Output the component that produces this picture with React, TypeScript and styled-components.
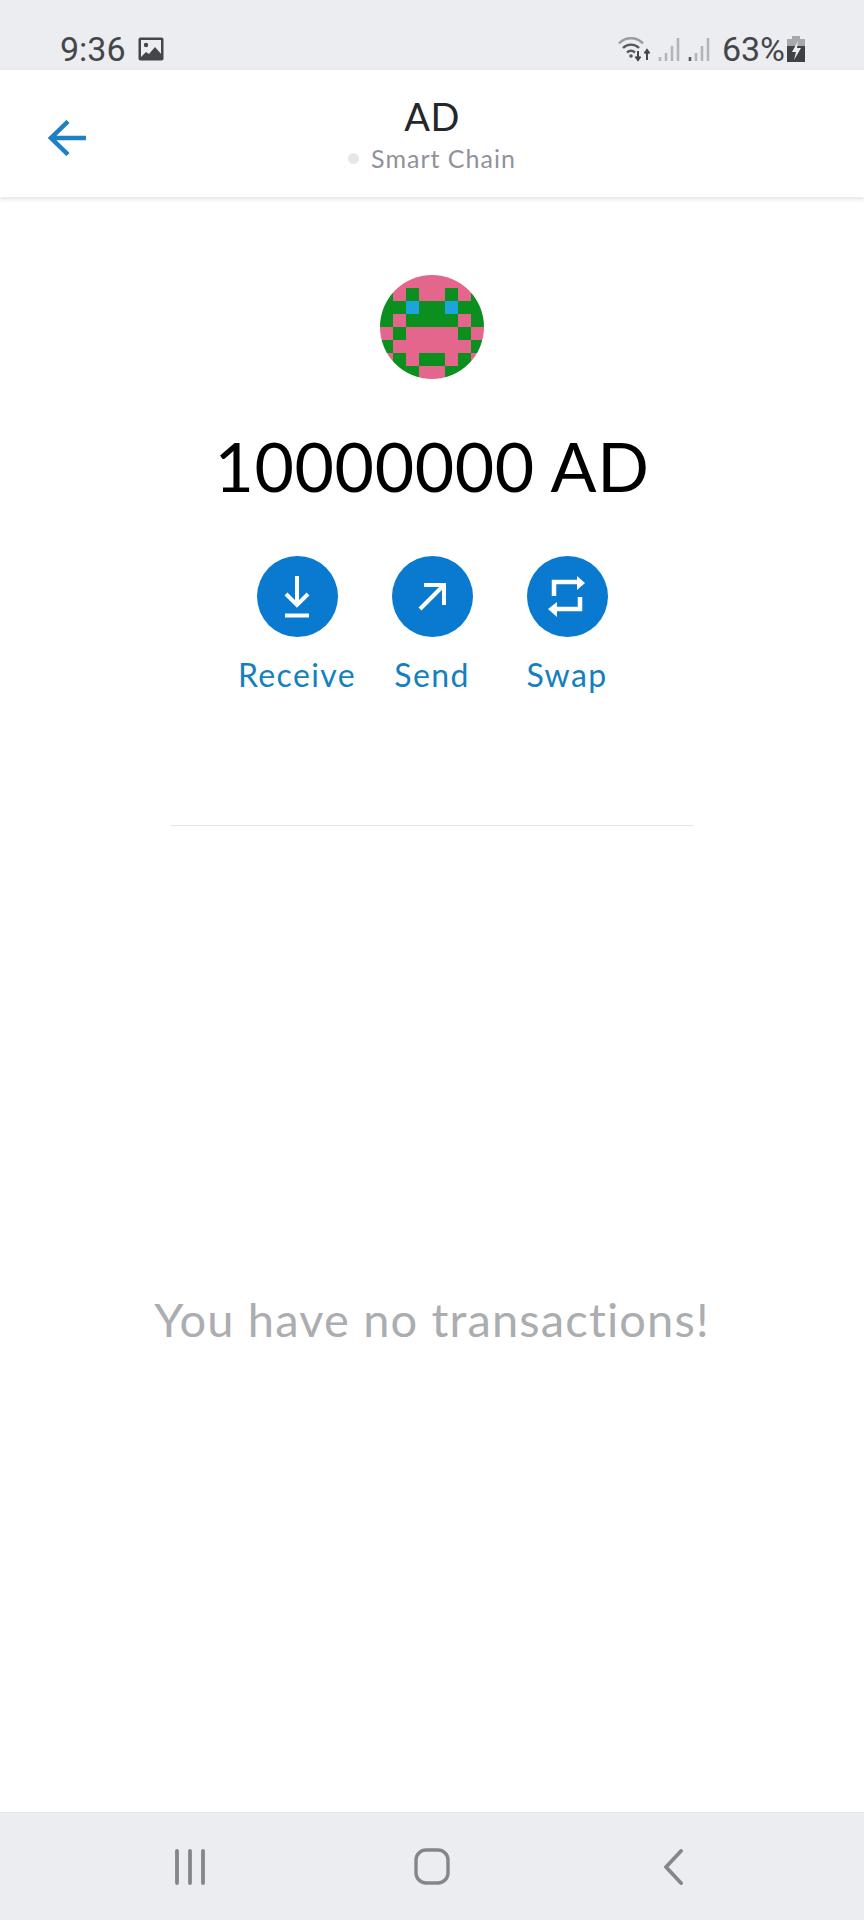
import React, { FC } from 'react'
import styled, { createGlobalStyle } from 'styled-components'

const GlobalStyle = createGlobalStyle`
  html, body {
    margin: 0;
    padding: 0;
    background: #fff;
    font-family: Lato, "Liberation Sans", sans-serif;
    font-variant-ligatures: none;
  }
`

const Screen = styled.div`
  width: 864px;
  height: 1920px;
  display: flex;
  flex-direction: column;
  overflow: hidden;
  background: #fff;
`

const StatusBar = styled.div`
  height: 70px;
  flex: none;
  box-sizing: border-box;
  padding: 32px 59px 0 60px;
  background: #ecedf1;
  display: flex;
  justify-content: space-between;
  align-items: flex-start;
  color: #44464a;
  font-family: Roboto, sans-serif;
  font-size: 34px;
  line-height: 34px;
`

const StatusGroup = styled.div`
  display: flex;
  align-items: center;
`

const Percent = styled.span`
  margin-left: 11px;
`

const Header = styled.header`
  height: 127px;
  flex: none;
  box-sizing: border-box;
  padding: 9px 24px 0 48px;
  position: relative;
  display: flex;
  align-items: center;
  background: #fff;
  box-shadow: 0 2px 5px rgba(0, 0, 0, 0.12);
`

const HeaderTitle = styled.div`
  position: absolute;
  left: 0;
  right: 0;
  top: 24px;
  text-align: center;
  color: #24272a;
`

const TokenName = styled.div`
  font-size: 38px;
  line-height: 44px;
  letter-spacing: 0.5px;
`

const Network = styled.div`
  margin-top: 5px;
  display: flex;
  justify-content: center;
  align-items: center;
  gap: 12px;
  font-size: 25px;
  line-height: 30px;
  letter-spacing: 1px;
  color: #8f9399;
`

const NetworkDot = styled.span`
  width: 11px;
  height: 11px;
  border-radius: 50%;
  background: #e6e7e9;
`

const Body = styled.main`
  flex: 1;
  display: flex;
  flex-direction: column;
  align-items: center;
  padding-top: 78px;
`

const Balance = styled.div`
  margin-top: 43px;
  font-size: 68px;
  line-height: 88px;
  letter-spacing: 0.6px;
  color: #000;
  white-space: nowrap;
`

const Actions = styled.div`
  margin-top: 46px;
  display: flex;
  gap: 55px;
`

const Action = styled.div`
  width: 80px;
  display: flex;
  flex-direction: column;
  align-items: center;
`

const ActionCircle = styled.div`
  width: 81px;
  height: 81px;
  flex: none;
  border-radius: 50%;
  background: #0a7ad1;
  display: flex;
  align-items: center;
  justify-content: center;
`

const ActionLabel = styled.div`
  margin-top: 19px;
  font-size: 32px;
  line-height: 38px;
  letter-spacing: 1.4px;
  color: #1480bd;
  white-space: nowrap;
`

const Divider = styled.div`
  margin-top: 131px;
  width: 523px;
  height: 1px;
  background: #e6e7e9;
`

const EmptyText = styled.div`
  margin-top: 465px;
  font-size: 47px;
  line-height: 56px;
  letter-spacing: 1.15px;
  color: #abadb0;
  white-space: nowrap;
`

const NavBar = styled.nav`
  height: 108px;
  flex: none;
  box-sizing: border-box;
  padding-left: 173px;
  background: #ecedf1;
  border-top: 1px solid #e5e6ea;
  display: grid;
  grid-template-columns: 241px 249px 20px;
  align-items: center;
`

const GalleryIcon: FC = () => (
  <svg width="26" height="24" viewBox="0 0 26 24" style={{ marginLeft: 12 }}>
    <rect width="25" height="23" x="0.5" y="0.5" rx="2" fill="#44464a" />
    <rect width="20" height="17" x="3" y="3" fill="#ecedf1" />
    <circle cx="8" cy="8" r="2.2" fill="#44464a" />
    <path d="M2 21l6-6 3 2 6-7 7 8v4H2z" fill="#44464a" />
  </svg>
)

const WifiIcon: FC = () => (
  <svg width="33" height="28" viewBox="0 0 33 28" fill="none">
    <path d="M1 8.500C7 1.500 19 1.500 25 8.500" stroke="#9a9b9f" strokeWidth="2.4" />
    <path d="M5 13c4.500-4.500 11.500-4.500 16 0" stroke="#55575b" strokeWidth="2.4" />
    <path d="M9 17.500c2.700-2.400 5.300-2.400 8 0" stroke="#55575b" strokeWidth="2.4" />
    <circle cx="13" cy="21" r="1.8" fill="#55575b" />
    <path d="M20 16v9M17.500 21.500l2.500 3.500 2.500-3.500" stroke="#44464a" strokeWidth="2" />
    <path d="M29 25v-9M26.500 18.500l2.500-3.500 2.500 3.500" stroke="#44464a" strokeWidth="2" />
  </svg>
)

const SignalIcon: FC<{ dark?: boolean }> = ({ dark }) => (
  <svg width="24" height="26" viewBox="0 0 24 26" fill="none" style={{ marginLeft: 6 }}>
    <path d="M3 25v-4" stroke={dark ? '#55575b' : '#b4b5b8'} strokeWidth="2.600" />
    <path d="M9 25v-8M15 25V10M21 25V2" stroke="#b4b5b8" strokeWidth="2.600" />
  </svg>
)

const BatteryIcon: FC = () => (
  <svg width="18" height="26" viewBox="0 0 18 26" style={{ marginLeft: 2 }}>
    <path d="M5 0h8v3h5v23H0V3h5z" fill="#a7a8ab" />
    <rect y="10" width="18" height="16" fill="#3f4145" />
    <path d="M11 5l-6 11h4l-2 8 7-12h-4z" fill="#ecedf1" />
  </svg>
)

const BackArrow: FC = () => (
  <svg width="38" height="36" viewBox="0 0 38 36" fill="none" stroke="#1d7fc4" strokeWidth="4.500">
    <path d="M2 18h36M20 1.500L3 18l17 16.500" />
  </svg>
)

const AVATAR_COLORS: Record<string, string> = { P: '#e4668d', G: '#0b8f1f', B: '#1fa3dc' }
const AVATAR_ROWS = ['PPPPPPPP', 'GPGPPGPG', 'GGBGGBGG', 'GPGGGGPG', 'PGPPPPGP', 'GPPPPPPG', 'PGPGGPGP', 'GGGPPGGG']

const Avatar: FC = () => (
  <svg width="104" height="104" viewBox="0 0 8 8">
    <clipPath id="avatar-clip">
      <circle cx="4" cy="4" r="4" />
    </clipPath>
    <g clipPath="url(#avatar-clip)" shapeRendering="crispEdges">
      {AVATAR_ROWS.map((row, y) =>
        row.split('').map((c, x) => <rect key={`${x}-${y}`} x={x} y={y} width="1.02" height="1.02" fill={AVATAR_COLORS[c]} />),
      )}
    </g>
  </svg>
)

const ReceiveIcon: FC = () => (
  <svg width="26" height="42" viewBox="0 0 26 42" fill="none" stroke="#fff" strokeWidth="4">
    <path d="M13 0v28M2 18l11 11 11-11M1 39.500h24" />
  </svg>
)

const SendIcon: FC = () => (
  <svg width="28" height="28" viewBox="0 0 28 28" fill="none" stroke="#fff" strokeWidth="4">
    <path d="M2 26L26 2M6 2h20v20" />
  </svg>
)

const SwapIcon: FC = () => (
  <svg width="38" height="42" viewBox="0 0 38 42" fill="none">
    <path d="M6 20V6h24" stroke="#fff" strokeWidth="4.500" />
    <path d="M32 21v12H8" stroke="#fff" strokeWidth="4.500" />
    <path d="M29 0l8 7-8 7zM9 26l-9 7 9 8z" fill="#fff" />
  </svg>
)

const NavRecents: FC = () => (
  <svg width="34" height="36" viewBox="0 0 34 36" fill="none" stroke="#85868b" strokeWidth="3.800" strokeLinecap="round">
    <path d="M4 2v32M17 2v32M30 2v32" />
  </svg>
)

const NavHome: FC = () => (
  <svg width="36" height="37" viewBox="0 0 36 37" fill="none" stroke="#85868b" strokeWidth="3.400">
    <rect x="2" y="2" width="32" height="33" rx="10" />
  </svg>
)

const NavBack: FC = () => (
  <svg width="20" height="36" viewBox="0 0 20 36" fill="none" stroke="#85868b" strokeWidth="3.800" strokeLinecap="round" strokeLinejoin="round">
    <path d="M18 2L3 18l15 16" />
  </svg>
)

const ACTIONS = [
  { label: 'Receive', icon: <ReceiveIcon /> },
  { label: 'Send', icon: <SendIcon /> },
  { label: 'Swap', icon: <SwapIcon /> },
]

const App: FC = () => {
  return (
    <Screen>
      <GlobalStyle />
      <StatusBar>
        <StatusGroup>
          9:36
          <GalleryIcon />
        </StatusGroup>
        <StatusGroup>
          <WifiIcon />
          <SignalIcon />
          <SignalIcon dark />
          <Percent>63%</Percent>
          <BatteryIcon />
        </StatusGroup>
      </StatusBar>
      <Header>
        <BackArrow />
        <HeaderTitle>
          <TokenName>AD</TokenName>
          <Network>
            <NetworkDot />
            Smart Chain
          </Network>
        </HeaderTitle>
      </Header>
      <Body>
        <Avatar />
        <Balance>10000000 AD</Balance>
        <Actions>
          {ACTIONS.map(a => (
            <Action key={a.label}>
              <ActionCircle>{a.icon}</ActionCircle>
              <ActionLabel>{a.label}</ActionLabel>
            </Action>
          ))}
        </Actions>
        <Divider />
        <EmptyText>You have no transactions!</EmptyText>
      </Body>
      <NavBar>
        <NavRecents />
        <NavHome />
        <NavBack />
      </NavBar>
    </Screen>
  )
}

export default App
